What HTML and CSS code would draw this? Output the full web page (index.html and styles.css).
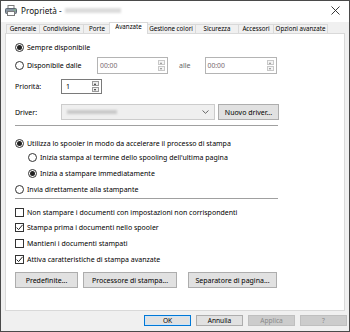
FILE: index.html
```html
<!DOCTYPE html>
<html lang="it">
<head>
<meta charset="utf-8">
<title>Proprietà</title>
<link rel="stylesheet" href="styles.css">
</head>
<body>
<div class="window">
  <div class="titlebar">
    <svg class="app-icon" width="12" height="11" viewBox="0 0 12 11">
      <rect x="3" y="0.5" width="6" height="3" fill="#fff" stroke="#7a7a7a"/>
      <rect x="0.5" y="3.5" width="11" height="5" rx="1" fill="#8a96a3" stroke="#5c6670"/>
      <rect x="2.5" y="6.5" width="7" height="4" fill="#fff" stroke="#7a7a7a"/>
      <rect x="9" y="4.5" width="1.5" height="1" fill="#6fd36f"/>
    </svg>
    <span class="title">Proprietà -</span>
    <span class="title-blur"></span>
    <span class="spacer"></span>
    <svg class="close" width="9" height="9" viewBox="0 0 9 9">
      <path d="M0.5 0.5 L8.5 8.5 M8.5 0.5 L0.5 8.5" stroke="#222" stroke-width="0.9"/>
    </svg>
  </div>

  <div class="tabs">
    <div class="tab w-gen">Generale</div>
    <div class="tab w-cond">Condivisione</div>
    <div class="tab w-porte">Porte</div>
    <div class="tab tab-active w-avz">Avanzate</div>
    <div class="tab w-gest">Gestione colori</div>
    <div class="tab w-sic">Sicurezza</div>
    <div class="tab w-acc">Accessori</div>
    <div class="tab w-opz">Opzioni avanzate</div>
  </div>

  <div class="panel">
    <div class="row r-sempre">
      <span class="radio checked"></span><span class="label">Sempre disponibile</span>
    </div>
    <div class="row r-disp">
      <span class="radio"></span><span class="label lbl-disp">Disponibile dalle</span>
      <div class="timebox disabled"><span class="tval">00:00</span><span class="spin"><span class="up"></span><span class="down"></span></span></div>
      <span class="alle">alle</span>
      <div class="timebox disabled t2"><span class="tval">00:00</span><span class="spin"><span class="up"></span><span class="down"></span></span></div>
    </div>
    <div class="row r-prio">
      <span class="lbl-field">Priorità:</span>
      <div class="numbox"><span class="nval">1</span><span class="spin dark"><span class="up"></span><span class="down"></span></span></div>
    </div>
    <div class="row r-driver">
      <span class="lbl-field">Driver:</span>
      <div class="select"><span class="sel-blur"></span><span class="spacer"></span>
        <svg class="chev" width="7" height="4" viewBox="0 0 7 4"><path d="M0.5 0.5 L3.5 3.3 L6.5 0.5" fill="none" stroke="#555" stroke-width="0.9"/></svg>
      </div>
      <div class="btn btn-nuovo">Nuovo driver...</div>
    </div>
    <div class="sep sep1"></div>
    <div class="row r-spool">
      <span class="radio checked"></span><span class="label">Utilizza lo spooler in modo da accelerare il processo di stampa</span>
    </div>
    <div class="row r-sub1 sub">
      <span class="radio"></span><span class="label">Inizia stampa al termine dello spooling dell'ultima pagina</span>
    </div>
    <div class="row r-sub2 sub">
      <span class="radio checked"></span><span class="label">Inizia a stampare immediatamente</span>
    </div>
    <div class="row r-invia">
      <span class="radio"></span><span class="label">Invia direttamente alla stampante</span>
    </div>
    <div class="sep sep2"></div>
    <div class="row r-cb1">
      <span class="check"></span><span class="label">Non stampare i documenti con impostazioni non corrispondenti</span>
    </div>
    <div class="row r-cb">
      <span class="check checked"><svg width="9" height="9" viewBox="0 0 9 9"><path d="M1.6 4.6 L3.6 6.6 L7.6 1.8" fill="none" stroke="#222" stroke-width="1"/></svg></span><span class="label">Stampa prima i documenti nello spooler</span>
    </div>
    <div class="row r-cb">
      <span class="check"></span><span class="label">Mantieni i documenti stampati</span>
    </div>
    <div class="row r-cb">
      <span class="check checked"><svg width="9" height="9" viewBox="0 0 9 9"><path d="M1.6 4.6 L3.6 6.6 L7.6 1.8" fill="none" stroke="#222" stroke-width="1"/></svg></span><span class="label">Attiva caratteristiche di stampa avanzate</span>
    </div>
    <div class="row r-btns">
      <div class="btn btn-pred">Predefinite...</div>
      <div class="btn btn-proc">Processore di stampa...</div>
      <div class="btn btn-sep">Separatore di pagina...</div>
    </div>
  </div>

  <div class="footer">
    <div class="btn fbtn btn-ok">OK</div>
    <div class="btn fbtn">Annulla</div>
    <div class="btn fbtn disabled">Applica</div>
    <div class="btn fbtn disabled">?</div>
  </div>
</div>
</body>
</html>
```

FILE: styles.css
```css
* { box-sizing: border-box; }

body {
  margin: 0;
  font-family: "Noto Sans", "Open Sans", sans-serif;
  font-size: 7px;
  color: #000;
  background: #fff;
}

.window {
  width: 350px;
  height: 332px;
  border: 1px solid #4a4a4a;
  background: #f0f0f0;
  display: flex;
  flex-direction: column;
  overflow: hidden;
}

/* title bar */
.titlebar {
  height: 21px;
  flex: none;
  background: #fff;
  display: flex;
  align-items: center;
  padding: 0 6px 2px 4px;
}
.app-icon { flex: none; margin-right: 4px; }
.title { font-size: 8.2px; color: #111; }
.title-blur {
  width: 56px;
  height: 5px;
  margin-left: 3px;
  background: #dcdcdc;
  filter: blur(1.2px);
}
.spacer { flex: 1; }
.close { margin-right: 3px; }

/* tabs */
.tabs {
  height: 11px;
  flex: none;
  display: flex;
  align-items: flex-end;
  padding-left: 5px;
}
.tab {
  height: 9px;
  border: 1px solid #d9d9d9;
  border-bottom: none;
  margin-right: -1px;
  background: #f0f0f0;
  display: flex;
  align-items: center;
  justify-content: center;
  font-size: 6.2px;
  line-height: 1;
  white-space: nowrap;
}
.tab-active {
  height: 12px;
  margin-bottom: -1px;
  margin-left: -1px;
  margin-right: -2px;
  background: #fff;
  position: relative;
  z-index: 1;
  padding-bottom: 2px;
}
.w-gen { width: 34px; }
.w-cond { width: 45px; }
.w-porte { width: 28px; }
.w-avz { width: 39px; }
.w-gest { width: 50px; }
.w-sic { width: 44px; }
.w-acc { width: 36px; }
.w-opz { width: 55px; }

/* panel */
.panel {
  height: 278px;
  flex: none;
  margin: 0 4px 0 4px;
  border: 1px solid #d9d9d9;
  background: #fff;
  padding-left: 9px;
  display: flex;
  flex-direction: column;
}

.row {
  display: flex;
  align-items: center;
  white-space: nowrap;
  flex: none;
}
.r-sempre { margin-top: 5px; height: 16px; }
.r-disp { margin-top: 2px; height: 17px; }
.r-prio { margin-top: 5px; height: 15px; }
.r-driver { margin-top: 10px; height: 16px; }
.r-spool { margin-top: 10px; height: 14px; }
.r-sub1 { height: 15px; }
.r-sub2 { height: 16px; }
.r-invia { height: 16px; }
.r-cb1 { margin-top: 6px; height: 14px; }
.r-cb { height: 16px; }
.r-btns { margin-top: 5px; height: 16px; }

.sub { padding-left: 13px; }

.label { margin-left: 3px; }

.radio {
  width: 9px;
  height: 9px;
  flex: none;
  border: 1px solid #333;
  border-radius: 50%;
  display: flex;
  align-items: center;
  justify-content: center;
}
.radio.checked::after {
  content: "";
  width: 5px;
  height: 5px;
  border-radius: 50%;
  background: #222;
}

.check {
  width: 9px;
  height: 9px;
  flex: none;
  border: 1px solid #333;
  position: relative;
  background: #fff;
}
.check svg { position: absolute; left: -1px; top: -1px; }

.lbl-disp { width: 70px; }
.lbl-field { width: 46px; }

.timebox, .numbox {
  height: 17px;
  border: 1px solid #b4b4b4;
  background: #fff;
  display: flex;
  align-items: center;
  justify-content: space-between;
  padding: 0 2px 0 2px;
}
.timebox { width: 71px; }
.timebox.t2 { width: 72px; }
.tval { color: #7a6a70; font-size: 6.8px; }
.alle { color: #666; margin: 0 14px 0 11px; }

.numbox {
  width: 41px;
  height: 15px;
  border-color: #7a7a7a;
  padding-left: 4px;
}

.spin {
  width: 7px;
  display: flex;
  flex-direction: column;
  gap: 1px;
}
.spin span {
  height: 5px;
  border: 1px solid #c8c8c8;
  background: #f4f4f4;
  position: relative;
}
.spin span::after {
  content: "";
  position: absolute;
  left: 1px;
  width: 0;
  height: 0;
  border-left: 1.5px solid transparent;
  border-right: 1.5px solid transparent;
}
.spin .up::after { top: 0.5px; border-bottom: 2px solid #888; }
.spin .down::after { top: 0.5px; border-top: 2px solid #888; }
.spin.dark span { border-color: #999; background: #eee; }
.spin.dark .up::after { border-bottom-color: #222; }
.spin.dark .down::after { border-top-color: #222; }

.select {
  width: 154px;
  height: 16px;
  border: 1px solid #cccccc;
  background: #efefef;
  display: flex;
  align-items: center;
  padding: 0 5px 0 5px;
}
.sel-blur {
  width: 50px;
  height: 4px;
  background: #c9c9c9;
  filter: blur(1.2px);
}

.btn {
  height: 16px;
  border: 1px solid #adadad;
  background: #e1e1e1;
  display: flex;
  align-items: center;
  justify-content: center;
  white-space: nowrap;
}
.btn-nuovo { width: 61px; margin-left: 3px; }
.btn-pred { width: 63px; }
.btn-proc { width: 94px; margin-left: 5px; }
.btn-sep { width: 89px; margin-left: 11px; }

.sep {
  height: 1px;
  width: 263px;
  background: #a0a0a0;
  flex: none;
}
.sep1 { margin-top: 5px; }
.sep2 { margin-top: 1px; }

/* footer */
.footer {
  flex: 1;
  display: flex;
  justify-content: flex-end;
  align-items: flex-start;
  gap: 5px;
  padding: 4px 2px 0 0;
}
.fbtn { width: 47px; height: 11px; font-size: 6.6px; }
.btn-ok { border: 1px solid #0078d7; box-shadow: inset 0 0 0 1px #d0e4f5; }
.fbtn.disabled { background: #cccccc; border-color: #bfbfbf; color: #8a8a8a; }
```
